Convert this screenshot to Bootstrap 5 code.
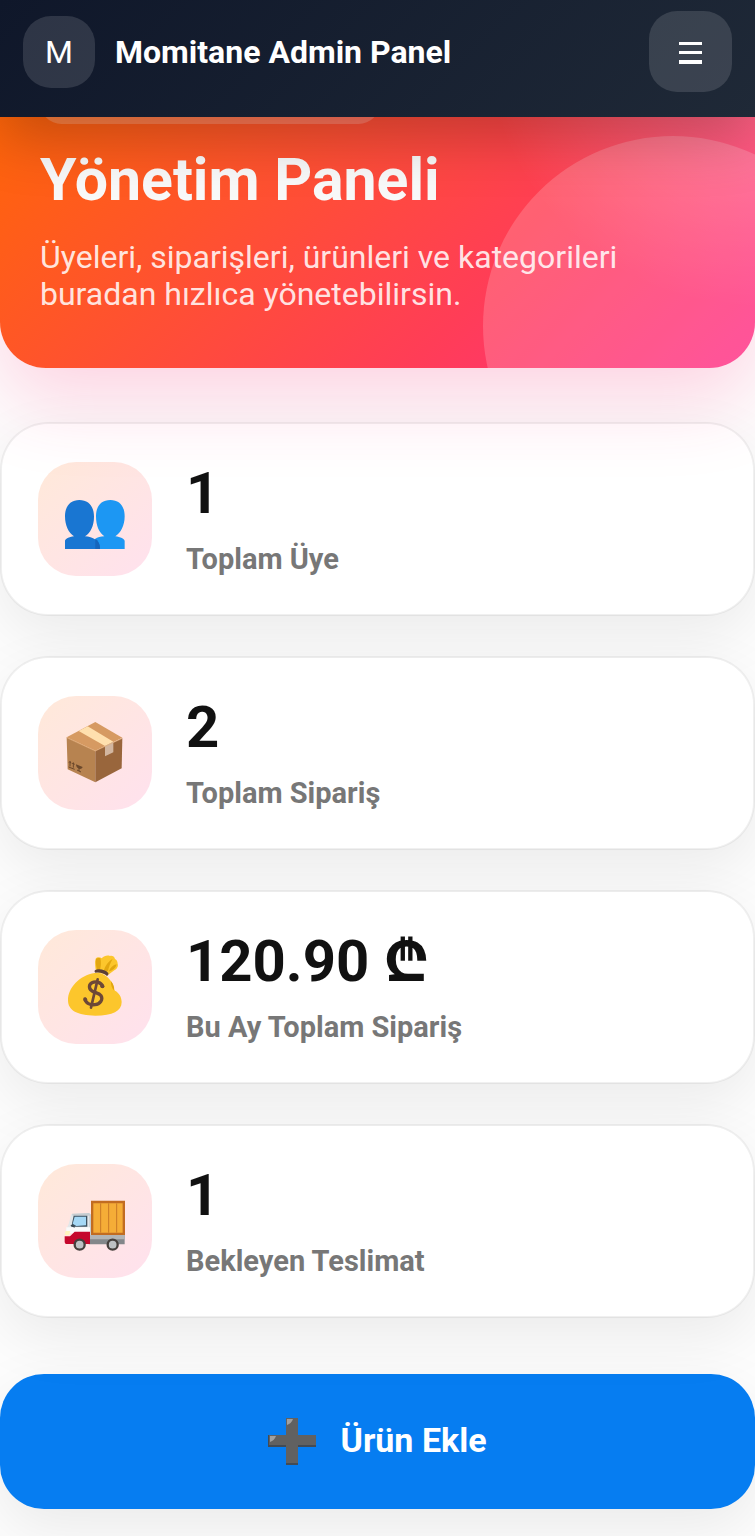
<!DOCTYPE html>
<html lang="tr">
<head>
<meta charset="utf-8">
<meta name="viewport" content="width=device-width, initial-scale=1">
<title>Momitane Admin Panel</title>
<link href="https://cdn.jsdelivr.net/npm/bootstrap@5.3.0/dist/css/bootstrap.min.css" rel="stylesheet">
<style>
body { font-family: Roboto, "Noto Sans", sans-serif; background: #fdfdfd; color: #111; overflow-x: hidden; }
.topbar { height: 117px; padding: 0 23px 14px; background: linear-gradient(135deg, #0f172a, #1f2937); box-shadow: 0 20px 60px rgba(0,0,0,.24); z-index: 10; }
.brand-mark { width: 72px; height: 72px; border-radius: 28px; background: rgba(255,255,255,.13); font-size: 32px; }
.brand-name { font-size: 32px; line-height: 40px; font-weight: 700; }
.menu-btn { width: 83px; height: 81px; border-radius: 28px; background: rgba(255,255,255,.13); }
.menu-btn:hover { background: rgba(255,255,255,.2); }
.hero { margin-top: -80px; padding: 44px 40px 55px; border-radius: 46px; background: radial-gradient(circle at 100% 0, rgba(255,255,255,.28), rgba(255,255,255,0) 270px), linear-gradient(135deg, #ff6a00, #ff3d57 68%, #ff2d87); box-shadow: 0 32px 80px rgba(255,45,120,.2); }
.hero-inner { position: relative; }
.hero-clip { position: absolute; inset: 0; overflow: hidden; border-radius: inherit; }
.hero-clip::after { content: ""; position: absolute; width: 380px; height: 380px; right: -108px; bottom: -148px; border-radius: 50%; background: rgba(255,255,255,.18); }
.hero-pill { width: 340px; max-width: 100%; height: 43px; border-radius: 24px; background: rgba(255,255,255,.2); margin-bottom: 22px; }
.hero h1 { font-size: 59px; line-height: 68px; font-weight: 700; margin-bottom: 25px; color: #f9f9f9; }
.hero p { font-size: 32px; line-height: 37px; color: rgba(255,255,255,.86); max-width: 620px; }
.stats { gap: 40px; margin-top: 54px; }
.stat { min-height: 194px; padding: 0 36px; gap: 34px; border: 2px solid rgba(0,0,0,.05); border-radius: 48px; background: #fff; background-clip: padding-box; box-shadow: 0 20px 60px rgba(0,0,0,.075); }
.stat-icon { width: 114px; height: 114px; border-radius: 38px; background: linear-gradient(135deg, #ffe9d9, #ffe1ee); overflow: hidden; }
.stat-text { padding-bottom: 4px; }
.stat-value { font-size: 58px; line-height: 68px; font-weight: 700; }
.stat-label { font-size: 29px; line-height: 34px; font-weight: 700; color: #777; margin-top: 15px; }
.add-btn { min-height: 135px; margin: 56px 0 27px; padding-bottom: 8px; gap: 24px; border-radius: 44px; background: #067df1; color: #fff; font-size: 34px; font-weight: 700; box-shadow: 0 20px 60px rgba(0,0,0,.08); }
.add-btn:hover { background: #056fd8; color: #fff; }
</style>
</head>
<body>
<header class="topbar sticky-top d-flex align-items-center justify-content-between text-white">
  <div class="d-flex align-items-center">
    <div class="brand-mark d-flex align-items-center justify-content-center flex-shrink-0">M</div>
    <div class="brand-name ms-3 ps-1">Momitane Admin Panel</div>
  </div>
  <button type="button" class="menu-btn btn border-0 p-0 d-flex align-items-center justify-content-center flex-shrink-0" aria-label="Menü">
    <svg width="24" height="24" viewBox="0 0 24 24" fill="#fff" aria-hidden="true"><path d="M0 2h23v3H0zM0 11h23v3H0zM0 20h23v4H0z"/></svg>
  </button>
</header>

<main>
  <section class="hero position-relative">
    <div class="hero-clip"></div>
    <div class="hero-inner">
      <div class="hero-pill" aria-hidden="true"></div>
      <h1>Yönetim Paneli</h1>
      <p class="mb-0">Üyeleri, siparişleri, ürünleri ve kategorileri buradan hızlıca yönetebilirsin.</p>
    </div>
  </section>

  <section class="stats d-flex flex-column">
    <article class="stat d-flex align-items-center">
      <div class="stat-icon flex-shrink-0">
        <svg width="114" height="114" viewBox="24 24 342 342" aria-hidden="true">
          <path fill="#1c97f3" d="M241 138c27 0 43 18 43 49 0 28-12 50-28 60 15 2 28 8 28 14v24h-88v-31c6-4 16-6 27-7-15-10-25-31-25-60 0-31 16-49 43-49z"/>
          <path fill="#1976d2" d="M148 138c27 0 44 18 44 50 0 28-11 49-27 59 23 1 45 13 45 35v3H105v-24c0-6 12-12 27-14-16-10-27-32-27-60 0-31 17-49 43-49z"/>
          <path fill="#1665bc" d="M196 254c8 5 14 15 14 28v3h-14z"/>
        </svg>
      </div>
      <div class="stat-text">
        <div class="stat-value">1</div>
        <div class="stat-label">Toplam Üye</div>
      </div>
    </article>

    <article class="stat d-flex align-items-center">
      <div class="stat-icon flex-shrink-0">
        <svg width="114" height="114" viewBox="24 21 342 342" aria-hidden="true">
          <path fill="#b78350" d="M110 145l86 40v95l-83-39z"/>
          <path fill="#99663c" d="M196 185l81-37-2 90-79 42z"/>
          <path fill="#d69a62" d="M110 145l86-46 81 47-81 39z"/>
          <path fill="#ffe0ae" d="M146 126l27-14 77 46-25 13z"/>
          <path fill="#d2b6a0" d="M225 171l25-13v32l-25 12z"/>
          <path fill="none" stroke="#e2ae79" stroke-width="2" d="M110 146l86 40 81-38"/>
          <path fill="none" stroke="#6b482b" stroke-width="3" d="M120 218v14M130 222v14M116 234l18 7M117 221l3-4 3 6M127 225l3-4 3 6M147 233v13M141 243l12 6"/>
          <path fill="#6b482b" d="M138 226l20 8c-3 6-7 7-11 5-6-2-9-7-9-13z"/>
        </svg>
      </div>
      <div class="stat-text">
        <div class="stat-value">2</div>
        <div class="stat-label">Toplam Sipariş</div>
      </div>
    </article>

    <article class="stat d-flex align-items-center">
      <div class="stat-icon flex-shrink-0">
        <svg width="114" height="114" viewBox="24 24 342 342" aria-hidden="true">
          <path fill="#fcc62c" d="M199 150c-4-15-5-29-2-40 5-6 13-5 18-1 8-8 17-10 25-7 7-2 13 2 15 9 5 2 8 8 8 14 3 8-3 16-10 20l-19 14z"/>
          <path fill="#e2a610" d="M211 109c3 11 2 24-1 35l-9-1c-3-13-5-23-3-32 4-4 9-4 13-2zM221 146c5-16 14-28 27-36-7 14-12 24-14 38zM236 149c5-12 13-20 24-22-3 13-12 18-24 22z"/>
          <path fill="#fcc62c" d="M194 153c17-3 38 8 49 25 8 12 8 22 12 28 12 6 20 19 20 34 0 27-27 41-79 41-54 0-82-16-82-46 0-38 35-75 80-82z"/>
          <path fill="#e2a610" d="M243 178c7 8 11 18 9 27-6-5-10-15-9-27z"/>
          <path fill="#5d4037" d="M195 145c8-6 30-4 40 8 1 4-1 8-4 9-8-8-20-12-34-10-4-1-4-5-2-7z"/>
          <path fill="none" stroke="#6d4837" stroke-width="10" stroke-linecap="round" d="M218 193c-4-11-20-17-32-11-10 5-10 18-1 24 8 7 21 5 28 15 7 12-3 26-18 27-15 2-28-5-30-17"/>
          <path fill="none" stroke="#6d4837" stroke-width="8" stroke-linecap="round" d="M203 172l-20 85"/>
          <circle cx="217" cy="193" r="6" fill="#6d4837"/><circle cx="166" cy="233" r="6" fill="#6d4837"/>
        </svg>
      </div>
      <div class="stat-text">
        <div class="stat-value">120.90 ₾</div>
        <div class="stat-label">Bu Ay Toplam Sipariş</div>
      </div>
    </article>

    <article class="stat d-flex align-items-center">
      <div class="stat-icon flex-shrink-0">
        <svg width="114" height="114" viewBox="24 21 342 342" aria-hidden="true">
          <path fill="#83878a" d="M176 233h108v29H176z"/><path fill="#b2b4b5" d="M176 233h108v14H176z"/>
          <path fill="#e3e7e9" d="M124 171l56-2v56h-73c2-10 5-16 9-24z"/>
          <path fill="#c5ccd0" d="M126 170l51-2 7 5v62h-6v-59h-50z"/>
          <path fill="#3d5260" d="M131 176h41v33h-48z"/><path fill="#a5d8f5" d="M134 179h34v26l-29 2-11-7z"/>
          <path fill="#fafafa" d="M109 211h71v18h-72z"/>
          <path fill="#c5082d" d="M104 238h16l14-14h46v37h-73l-3-5z"/>
          <path fill="#fff5bd" d="M107 222h14l-4 12h-13z"/>
          <path fill="#39474f" d="M123 203l11 5v4l-12-5z"/>
          <path fill="#c26c21" d="M183 131h102v103H183z"/>
          <path fill="#f5ad37" d="M190 139h88v88h-88z"/>
          <path fill="none" stroke="#c97a26" stroke-width="3" d="M212 139v88M236 139v88M260 139v88"/>
          <g fill="#bec1c3" stroke="#46403d" stroke-width="7"><circle cx="149" cy="263" r="15"/><circle cx="248" cy="263" r="15"/></g>
        </svg>
      </div>
      <div class="stat-text">
        <div class="stat-value">1</div>
        <div class="stat-label">Bekleyen Teslimat</div>
      </div>
    </article>
  </section>

  <button type="button" class="add-btn btn border-0 w-100 d-flex align-items-center justify-content-center">
    <svg width="48" height="48" viewBox="0 0 48 48" aria-hidden="true">
      <path fill="#424b55" d="M18 2h12v16h18v12H30v18H18V30H0V18h18z"/>
      <path fill="#616161" d="M18 1h12v17h18v10H30v18H18V28H1V18h17z"/>
      <path fill="#a0a0a0" d="M19 2h6c-1 3-3 5-6 6zM2 19h6c-1 3-3 5-6 6z"/>
    </svg>
    <span>Ürün Ekle</span>
  </button>
</main>
<script src="https://cdn.jsdelivr.net/npm/bootstrap@5.3.0/dist/js/bootstrap.bundle.min.js"></script>
</body>
</html>
